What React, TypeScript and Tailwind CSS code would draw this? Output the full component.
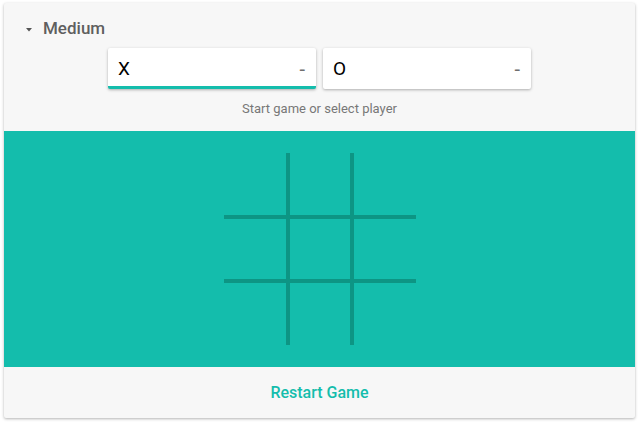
import React from 'react';

const PlayerBox = ({ mark, active }: { mark: string; active?: boolean }) => (
  <div
    className={`w-[208px] h-[41px] bg-white rounded-[2px] shadow-[0_1px_3px_rgba(0,0,0,0.3)] flex items-center justify-between pl-[10px] pr-[11px] ${
      active ? 'border-b-[3px] border-[#14bdac] pt-[3px]' : ''
    }`}
  >
    <span className="text-[19px] text-black leading-none">{mark}</span>
    <span className="text-[20px] text-[#6f6f6f] leading-none">-</span>
  </div>
);

export default function App() {
  return (
    <div className="w-[638px] h-[422px] bg-white pt-[3px] px-[4px] font-['Roboto',sans-serif]">
      <div className="w-[631px] h-[415px] bg-[#f7f7f7] rounded-[2px] shadow-[0_1px_3px_rgba(0,0,0,0.3)] flex flex-col overflow-hidden">
        {/* Difficulty */}
        <div className="h-[45px] flex items-center pl-[22px] pt-[6px]">
          <svg width="6" height="4" viewBox="0 0 6 4" className="mr-[11px] mt-[2px]">
            <path d="M0 0h6L3 3.5z" fill="#555" />
          </svg>
          <span className="text-[17px] font-medium text-[#5f5f5f]">Medium</span>
        </div>

        {/* Players */}
        <div className="flex justify-center gap-[7px]">
          <PlayerBox mark="X" active />
          <PlayerBox mark="O" />
        </div>
        <div className="h-[42px] flex items-center justify-center text-[13px] text-[#777] pb-[2px]">
          Start game or select player
        </div>

        {/* Board */}
        <div className="h-[236px] bg-[#14bdac] flex items-center justify-center">
          <div className="grid grid-cols-[62px_4px_60px_4px_62px] grid-rows-[62px_4px_60px_4px_62px] w-[192px] h-[192px]">
            {Array.from({ length: 25 }).map((_, i) => {
              const r = Math.floor(i / 5);
              const c = i % 5;
              const line = r % 2 === 1 || c % 2 === 1;
              return <div key={i} className={line ? 'bg-[#0d9584]' : ''} />;
            })}
          </div>
        </div>

        {/* Restart */}
        <div className="flex-1 flex items-center justify-center">
          <span className="text-[16px] font-medium text-[#14bdac]">Restart Game</span>
        </div>
      </div>
    </div>
  );
}
